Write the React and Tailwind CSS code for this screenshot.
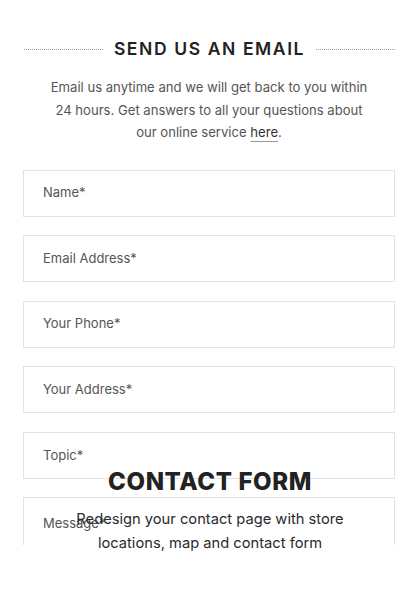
import React from "react";

const fields = ["Name*", "Email Address*", "Your Phone*", "Your Address*", "Topic*"];

const App = () => {
  return (
    <div
      className="relative w-[420px] h-[600px] bg-white overflow-hidden"
      style={{ fontFamily: "Inter, 'Noto Sans', sans-serif" }}
    >
      {/* screenshot of the form, cut off at the bottom */}
      <div className="h-[545px] overflow-hidden pl-[23px] pr-[25px] pt-[37px]">
        <div className="flex items-center gap-[11px] pl-[1px]">
          <div className="flex-1 border-t border-dotted border-[#9a9a9a]" />
          <h2 className="text-[17.5px] font-semibold tracking-[1.6px] text-[#222] leading-[24px]">
            SEND US AN EMAIL
          </h2>
          <div className="flex-1 border-t border-dotted border-[#9a9a9a]" />
        </div>

        <p className="mt-[15px] text-center text-[13.1px] leading-[22.5px] text-[#555] px-[24px]">
          Email us anytime and we will get back to you within 24 hours. Get
          answers to all your questions about our online service{" "}
          <span className="text-[#333] underline decoration-[#999] underline-offset-[4px]">
            here
          </span>
          .
        </p>

        <div className="mt-[26px] flex flex-col gap-[18.6px]">
          {fields.map((f) => (
            <div
              key={f}
              className="h-[47px] border border-[#e3e3e3] flex items-center pl-[19px] pr-[20px] text-[13px] text-[#555]"
            >
              {f}
            </div>
          ))}
          <div className="h-[120px] border border-[#e3e3e3] pl-[19px] pt-[16px] text-[13px] text-[#555]">
            Message*
          </div>
        </div>
      </div>

      {/* caption over the screenshot */}
      <div className="absolute left-0 right-0 top-[466px] flex flex-col items-center">
        <h1 className="text-[24px] font-extrabold tracking-[0.6px] text-[#222] leading-[32px]">
          CONTACT FORM
        </h1>
        <p className="mt-[9px] text-center text-[14.7px] leading-[24px] text-[#2a2a2a] w-[290px]">
          Redesign your contact page with store locations, map and contact form
        </p>
      </div>
    </div>
  );
};

export default App;
